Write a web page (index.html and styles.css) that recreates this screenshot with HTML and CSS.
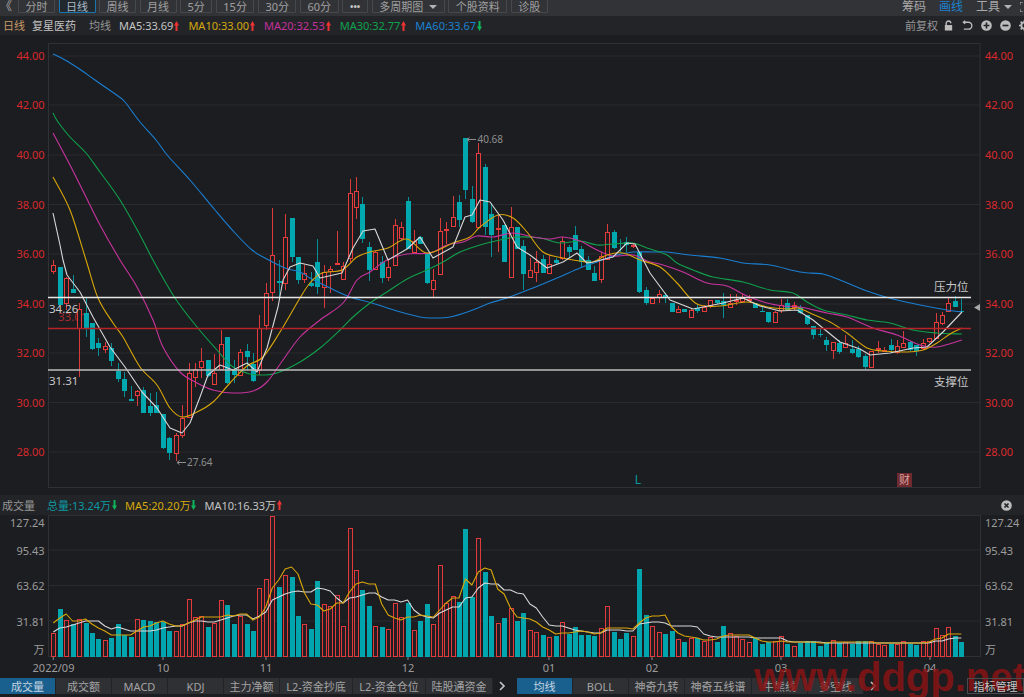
FILE: index.html
```html
<!DOCTYPE html>
<html lang="zh-CN">
<head>
<meta charset="utf-8">
<title>复星医药 日线</title>
<link rel="stylesheet" href="styles.css">
</head>
<body>
<div class="app">
  <header class="toolbar">
    <span class="back">《</span>
    <nav class="periods">
      <span class="btn">分时</span>
      <span class="btn active">日线</span>
      <span class="btn">周线</span>
      <span class="btn">月线</span>
      <span class="btn">5分</span>
      <span class="btn">15分</span>
      <span class="btn">30分</span>
      <span class="btn">60分</span>
      <span class="btn dots">•••</span>
      <span class="btn">多周期图<i class="caret"></i></span>
      <span class="btn">个股资料</span>
      <span class="btn">诊股</span>
    </nav>
    <div class="tools">
      <span>筹码</span>
      <span class="blue">画线</span>
      <span>工具<i class="caret small"></i></span>
      <svg class="full" viewBox="0 0 8 10"><path d="M0 3V0h3M5 0h3M0 7v3h3"/></svg>
    </div>
  </header>

  <section class="info">
    <span class="period">日线</span>
    <span class="name">复星医药</span>
    <span class="kind">均线</span>
    <span class="ma c-white">MA5:33.69<svg class="arrow up" viewBox="0 0 5 10"><path d="M2.5 0 5 4.500H3.500V10h-2V4.500H0z"/></svg></span>
    <span class="ma c-yellow">MA10:33.00<svg class="arrow up" viewBox="0 0 5 10"><path d="M2.5 0 5 4.500H3.500V10h-2V4.500H0z"/></svg></span>
    <span class="ma c-pink">MA20:32.53<svg class="arrow up" viewBox="0 0 5 10"><path d="M2.5 0 5 4.500H3.500V10h-2V4.500H0z"/></svg></span>
    <span class="ma c-green">MA30:32.77<svg class="arrow up" viewBox="0 0 5 10"><path d="M2.5 0 5 4.500H3.500V10h-2V4.500H0z"/></svg></span>
    <span class="ma c-blue">MA60:33.67<svg class="arrow down" viewBox="0 0 5 10"><path d="M2.5 10 5 5.500H3.500V0h-2v5.500H0z"/></svg></span>
    <div class="info-right">
      <span class="kind">前复权</span>
      <svg class="ic" viewBox="0 0 12 12"><path class="ic-line" d="M3.500 6V3.600a2.500 2.500 0 0 1 5 0"/><rect class="ic-fill" x="2" y="5.500" width="8" height="6"/></svg>
      <svg class="ic" viewBox="0 0 12 12"><path class="ic-line" d="M1.500 2.500h5.500a3.500 3.500 0 0 1 0 7.500H2M3.500 .8 1.500 2.500l2 1.700"/></svg>
      <svg class="ic" viewBox="0 0 12 12"><circle class="ic-fill" cx="6" cy="6" r="5.800"/><path class="ic-cut" d="M2.800 6h6.400M6 2.800v6.400"/></svg>
      <svg class="ic" viewBox="0 0 12 12"><circle class="ic-fill" cx="6" cy="6" r="5.800"/><path class="ic-cut" d="M2.800 6h6.400"/></svg>
      <svg class="ic" viewBox="0 0 12 12"><circle class="ic-ring" cx="6" cy="6" r="3.500"/><path class="ic-ray" d="M6 0v2M6 10v2M0 6h2M10 6h2M1.800 1.800l1.400 1.400M8.800 8.800l1.400 1.400M1.800 10.200l1.400-1.400M8.800 3.200l1.400-1.400"/></svg>
    </div>
  </section>

  <svg id="price" class="plot price" viewBox="0 35 1024 460"></svg>

  <section class="info vol-head">
    <span class="kind wide">成交量</span>
    <span class="ma c-teal">总量:13.24万<svg class="arrow down" viewBox="0 0 5 10"><path d="M2.5 10 5 5.500H3.500V0h-2v5.500H0z"/></svg></span>
    <span class="ma c-yellow">MA5:20.20万<svg class="arrow down" viewBox="0 0 5 10"><path d="M2.5 10 5 5.500H3.500V0h-2v5.500H0z"/></svg></span>
    <span class="ma c-white">MA10:16.33万<svg class="arrow up" viewBox="0 0 5 10"><path d="M2.5 0 5 4.500H3.500V10h-2V4.500H0z"/></svg></span>
    <div class="info-right closer">
      <svg class="ic" viewBox="0 0 12 12"><circle class="ic-fill" cx="6" cy="6" r="5.800"/><path class="ic-cut" d="M3.800 3.800l4.400 4.400M8.200 3.800 3.800 8.200"/></svg>
    </div>
  </section>

  <svg id="volume" class="plot volume" viewBox="0 515 1024 163"></svg>

  <footer class="tabs">
    <div class="tabgroup left">
      <span class="tab active">成交量</span>
      <span class="tab">成交额</span>
      <span class="tab">MACD</span>
      <span class="tab">KDJ</span>
      <span class="tab">主力净额</span>
      <span class="tab long">L2-资金抄底</span>
      <span class="tab long">L2-资金仓位</span>
      <span class="tab mid">陆股通资金</span>
    </div>
    <svg class="chev" viewBox="0 0 8 10"><path d="M2 1l4 4-4 4"/></svg>
    <div class="tabgroup right">
      <span class="tab active">均线</span>
      <span class="tab">BOLL</span>
      <span class="tab">神奇九转</span>
      <span class="tab mid2">神奇五线谱</span>
      <span class="tab">牛熊线</span>
      <span class="tab">多空线</span>
    </div>
    <svg class="chev" viewBox="0 0 8 10"><path d="M2 1l4 4-4 4"/></svg>
    <span class="tab manage">指标管理</span>
  </footer>
  <div class="watermark">www.ddgp.net</div>
</div>
<script src="chart.js"></script>
</body>
</html>
```
FILE: styles.css
```css
* { box-sizing: border-box; }
html, body { margin: 0; height: 100%; background: #1c1d21; overflow: hidden; }
body { font: 11px/1 "Noto Sans", "Noto Sans CJK SC", sans-serif; color: #b0b0b0; }
.app { position: relative; width: 1024px; height: 697px; overflow: hidden; display: flex; flex-direction: column; }

.toolbar { height: 16px; flex: none; display: flex; background: #323337; align-items: flex-start; overflow: hidden; }
.back { width: 18px; flex: none; font: 12px/12px "Noto Sans CJK TC", sans-serif; color: #a8a8a8; }
.periods { display: flex; gap: 3.500px; }
.btn { height: 14px; margin-top: -1px; padding: 0 6.500px; border: 1px solid #46484c; border-radius: 1px; color: #a0a0a0; line-height: 13px; white-space: nowrap; }
.btn.active { border-color: #1b76b0; color: #a9b8c4; background: #21282e; }
.dots { font-size: 9px; font-weight: bold; padding: 0 7px; color: #c8c8c8; }
.caret { display: inline-block; width: 0; height: 0; border: 4px solid transparent; border-top: 4px solid #b4b4b4; border-bottom: 0; margin: 0 0 2px 6px; }
.caret.small { margin-left: 4px; }
.tools { margin-left: auto; margin-right: -4px; display: flex; gap: 13px; color: #a8a8a8; line-height: 13px; white-space: nowrap; font-size: 12px; }
.blue { color: #1b82d0; }
.full { width: 8px; height: 10px; margin: 2px 0 0 -5px; fill: none; stroke: #b4b4b4; stroke-width: 1; }

.info { height: 19px; flex: none; display: flex; align-items: center; background: #232428; padding-left: 3px; white-space: nowrap; }
.period { color: #c89a66; margin-right: 7px; }
.name { color: #c2c2c2; margin-right: 13px; }
.kind { color: #969696; margin-right: 8px; }
.ma { display: flex; align-items: center; margin-right: 9px; }
.arrow { width: 5px; height: 10px; margin-left: 1px; }
.arrow.up { fill: #ee3333; }
.arrow.down { fill: #0fb35a; }
.c-white { color: #c4c4c4; }
.c-yellow { color: #d4a90a; }
.c-pink { color: #c4309c; }
.c-green { color: #10a34e; }
.c-blue { color: #1b82d0; }
.c-teal { color: #0b9aa2; }
.info-right { margin-left: auto; display: flex; align-items: center; gap: 8px; margin-right: -6px; }
.info-right .kind { margin-right: -3px; }
.ic { width: 11px; height: 11px; flex: none; }
.ic-fill { fill: #bcbcbc; }
.ic-line { fill: none; stroke: #bcbcbc; stroke-width: 1.500; }
.ic-cut { fill: none; stroke: #232428; stroke-width: 1.800; }
.ic-ring { fill: none; stroke: #bcbcbc; stroke-width: 2.200; }
.ic-ray { fill: none; stroke: #bcbcbc; stroke-width: 1.800; }

.vol-head { height: 20px; }
.wide { margin-right: 12px; margin-left: -1px; }
.vol-head .ma { margin-right: 8px; }
.info-right.closer { margin-right: 12px; }

.plot { display: block; width: 1024px; flex: none; background: #1c1d21; }
.price { height: 460px; }
.volume { height: 163px; }

.frame { fill: none; stroke: #303135; stroke-width: 1; }
.grid { stroke: #2a2b2f; stroke-width: 1; }
.axis-red { fill: #d9292c; font-size: 11px; }
.axis-gray { fill: #9c9c9c; font-size: 11px; }
.end { text-anchor: end; }
.date { fill: #9c9c9c; font-size: 11px; text-anchor: middle; }
.tick { stroke: #8a8a8a; stroke-width: 1; }

.wick-up { stroke: #d93a3a; stroke-width: 1; }
.wick-down { stroke: #058e96; stroke-width: 1; }
.body-up { fill: #1c1d21; stroke: #e83c3c; stroke-width: 1; }
.body-down { fill: #00a8b0; }
.vol-up { fill: #241d21; stroke: #e13a3c; stroke-width: 1; }
.vol-down { fill: #00a5ad; }

.line { fill: none; stroke-width: 1.100; stroke-linejoin: round; }
.l-white { stroke: #d8d8d8; }
.l-yellow { stroke: #d8a60a; }
.l-pink { stroke: #c8349e; }
.l-green { stroke: #10a04c; }
.l-blue { stroke: #1a7fd2; }

.level-high { stroke: #e8e8e8; stroke-width: 1.300; }
.level-mid { stroke: #b52428; stroke-width: 1.300; }
.level-low { stroke: #bcbcbc; stroke-width: 1.300; }
.note { fill: #c8c8c8; font-size: 11.500px; }
.note-red { fill: #a82c2e; font-size: 11.500px; }
.ext { fill: #8e8e8e; font-size: 10px; }
.ext-line { fill: none; stroke: #8e8e8e; stroke-width: 1; }
.pointer { fill: #a8a8a8; }
.letter { fill: #0b9aa2; font-size: 12px; text-anchor: middle; }
.badge { fill: #6e2a2e; }
.badge-text { fill: #d8a0a0; font-size: 11px; text-anchor: middle; }

.tabs { height: 16px; flex: none; display: flex; align-items: stretch; background: #1c1d21; }
.tabgroup { display: flex; }
.tabgroup.right { margin-left: 7px; }
.tab { width: 56px; display: flex; align-items: center; justify-content: center; background: #2f3034; color: #a4a4a4; border-right: 1px solid #222327; white-space: nowrap; }
.tab.active { background: #19608f; color: #c4d4e0; }
.tab.long { width: 73px; }
.tab.mid { width: 67px; }
.tab.mid2 { width: 67px; }
.manage { position: relative; z-index: 2; width: 57px; margin-left: auto; background: transparent; color: #c4c4c4; border: 1px solid #4a4b4f; }
.chev { width: 8px; height: 10px; margin: 3px 4px 0 5px; fill: none; stroke: #c8c8c8; stroke-width: 1.600; flex: none; }

.watermark { position: absolute; z-index: 1; left: 754px; top: 654px; font: bold 40px/46px "Liberation Sans", sans-serif; color: rgba(140, 20, 20, .82); white-space: nowrap; pointer-events: none; }
```
FILE: chart.js
```js
(function () {
  var X0 = 53.3, DX = 6.44;
  function bx(i) { return X0 + DX * i; }
  function ln(c, x1, y1, x2, y2) { return '<line class="' + c + '" x1="' + x1 + '" y1="' + y1 + '" x2="' + x2 + '" y2="' + y2 + '"/>'; }
  function txt(c, x, y, s) { return '<text class="' + c + '" x="' + x + '" y="' + y + '">' + s + '</text>'; }
  function poly(c, pts) { return '<polyline class="line ' + c + '" points="' + pts.join(' ') + '"/>'; }
  /* Catmull-Rom smoothing of a moving-average curve */
  function smooth(c, pts) {
    var p = pts.map(function (s) { return s.split(',').map(Number); });
    var d = 'M' + p[0][0] + ' ' + p[0][1];
    for (var i = 0; i < p.length - 1; i++) {
      var a = p[Math.max(i - 1, 0)], b = p[i], e = p[i + 1], f = p[Math.min(i + 2, p.length - 1)];
      d += 'C' + (b[0] + (e[0] - a[0]) / 6).toFixed(1) + ' ' + (b[1] + (e[1] - a[1]) / 6).toFixed(1) + ' ' +
        (e[0] - (f[0] - b[0]) / 6).toFixed(1) + ' ' + (e[1] - (f[1] - b[1]) / 6).toFixed(1) + ' ' + e[0] + ' ' + e[1];
    }
    return '<path class="line ' + c + '" d="' + d + '"/>';
  }

  /* candle: up(1)/down(0), body top, body bottom, wick top, wick bottom */
  var C = [
    [1,265,271,260,274],[0,267,305,267,305],[1,278,303,277,310],[0,289,293,275,293],[1,309,328,303,377],
    [0,313,328,298,337],[0,323,349,323,350],[0,343,348,338,356],[1,346,349,342,353],[0,348,361,343,366],
    [0,371,379,363,382],[0,379,391,372,397],[0,399,401,386,401],[1,391,395,390,406],[0,390,413,387,413],
    [0,406,413,393,416],[0,405,413,392,413],[0,414,448,414,449],[0,438,453,437,460],[1,435,453,433,461],
    [1,418,435,405,438],[1,373,417,363,417],[1,369,377,363,387],[1,361,367,348,378],[0,360,376,360,377],
    [1,373,384,354,385],[1,344,369,330,370],[0,337,383,337,384],[0,370,375,360,383],[1,352,375,349,376],
    [0,351,357,344,370],[0,364,381,353,382],[1,328,370,315,375],[1,293,325,283,330],[1,255,292,208,301],
    [0,281,283,260,300],[1,237,283,214,290],[0,218,257,218,262],[0,257,280,257,284],[1,273,279,265,283],
    [0,283,286,272,287],[0,262,287,239,294],[1,272,287,265,308],[1,269,271,266,293],[1,263,264,231,264],
    [1,266,279,262,280],[1,193,258,179,263],[1,191,207,177,219],[0,204,239,197,243],[0,247,270,242,281],
    [1,252,269,251,269],[0,262,278,256,283],[1,267,277,260,281],[1,225,265,219,265],[1,227,238,222,240],
    [0,201,249,197,249],[1,241,252,230,252],[0,237,244,236,244],[0,253,283,253,284],[1,280,289,269,297],
    [1,231,274,218,274],[1,229,230,222,244],[1,217,226,196,226],[0,202,220,195,227],[0,138,190,138,199],
    [0,199,222,186,223],[1,153,227,143,227],[0,167,227,164,235],[0,214,235,203,257],[1,228,229,215,252],
    [0,225,262,225,262],[1,227,277,207,277],[0,227,249,227,249],[0,246,274,240,290],[1,270,277,258,277],
    [1,262,272,251,282],[0,259,273,255,273],[1,264,273,255,273],[0,260,263,258,264],[1,241,258,237,260],
    [0,247,252,245,258],[0,235,250,226,250],[0,249,262,246,267],[0,260,270,256,270],[0,273,281,266,281],
    [1,256,279,252,283],[1,232,259,224,259],[0,232,248,230,249],[0,243,244,239,252],[0,242,245,237,252],
    [1,245,246,243,248],[0,252,292,252,293],[0,290,303,287,305],[1,298,303,298,304],[1,294,297,290,303],
    [0,295,298,293,303],[0,303,312,303,312],[1,309,312,306,312],[0,309,312,309,312],[1,310,317,308,318],
    [0,308,311,305,313],[1,307,311,305,312],[1,300,305,300,308],[0,300,303,300,304],[0,301,305,293,318],
    [1,303,307,294,307],[1,300,301,294,305],[1,298,301,294,303],[1,299,300,295,302],[0,303,308,303,308],
    [0,311,312,306,312],[0,312,322,312,323],[1,312,322,311,323],[1,305,310,299,313],[0,303,310,299,310],
    [1,305,307,302,310],[0,307,313,305,314],[0,315,324,315,325],[0,326,335,326,339],[0,334,335,329,337],
    [0,340,345,337,351],[1,342,350,342,359],[0,343,352,340,354],[1,343,347,335,347],[0,349,353,340,354],
    [0,349,357,346,358],[0,356,367,354,369],[1,351,367,351,367],[1,348,349,341,353],[1,350,351,347,352],
    [0,345,350,339,352],[1,346,352,340,354],[1,343,347,331,348],[0,342,350,341,351],[0,345,351,345,356],
    [1,343,348,339,350],[1,338,341,338,343],[1,322,338,313,338],[1,315,323,312,325],[1,303,311,298,311],
    [0,301,307,296,307],[0,311,312,299,312]
  ];

  /* volume bar: up(1)/down(0), top */
  var V = [
    [1,633],[0,609],[1,620],[0,624],[1,619],[0,623],[0,633],[0,639],[1,640],[0,638],[0,624],[0,635],[0,637],[1,619],[0,620],
    [0,621],[0,622],[0,622],[0,631],[1,631],[1,624],[1,599],[1,617],[1,616],[0,627],[1,623],[1,600],[0,605],[0,624],[1,616],
    [0,624],[0,631],[1,588],[1,579],[1,516],[0,587],[1,575],[0,577],[0,616],[1,624],[0,629],[0,581],[1,604],[1,606],[1,595],
    [1,626],[1,528],[1,570],[0,590],[0,606],[1,626],[0,627],[1,629],[1,603],[1,617],[0,603],[1,630],[0,621],[0,604],[1,624],
    [1,565],[1,603],[1,596],[0,602],[0,529],[0,597],[1,538],[0,572],[0,616],[1,623],[0,618],[1,608],[0,621],[0,613],[1,630],
    [1,632],[0,635],[1,637],[0,636],[1,622],[0,634],[0,627],[0,635],[0,635],[0,636],[1,628],[1,606],[0,632],[0,639],[0,633],
    [1,636],[0,569],[0,615],[1,626],[1,632],[0,634],[0,631],[1,639],[0,642],[1,638],[0,638],[1,641],[1,637],[0,642],[0,626],
    [1,633],[1,636],[1,639],[1,642],[0,638],[0,644],[0,642],[1,641],[1,636],[0,644],[1,646],[0,643],[0,641],[0,641],[0,646],
    [0,642],[1,640],[0,643],[1,642],[0,644],[0,641],[0,641],[1,641],[1,644],[1,645],[0,644],[1,644],[1,641],[0,644],[0,645],
    [1,641],[1,641],[1,628],[1,635],[1,627],[0,636],[0,642]
  ];

  var VY = [623,618,614,621,621,619,624,628,631,635,635,635,635,631,627,626,623,621,624,626,626,623,620,617,617,617,617,615,616,614,614,620,617,607,588,580,569,567,574,593,604,605,611,609,603,
    603,592,584,582,584,584,604,615,618,620,617,617,615,616,617,610,603,598,598,579,585,572,568,570,589,594,608,617,618,619,622,627,630,634,633,633,632,631,632,634,633,628,628,628,628,629,623,618,616,616,615,627,633,
    636,637,638,640,640,639,636,635,635,635,635,638,641,642,642,641,642,642,642,642,642,643,643,642,642,642,642,642,642,642,643,643,643,643,643,643,643,643,642,639,638,634,634,634];
  var VW = [632,628,627,625,623,621,621,621,626,629,627,629,631,631,631,631,630,628,627,626,626,623,621,621,622,622,620,618,616,615,615,619,616,612,600,597,594,592,591,592,592,588,589,591,598,
    603,598,597,595,593,593,597,600,600,602,600,610,615,617,618,613,610,607,607,598,597,588,583,584,584,590,590,593,594,604,608,617,625,626,626,628,630,631,632,633,633,630,630,630,631,631,624,623,622,622,623,626,626,
    626,626,627,634,636,637,637,637,637,637,637,638,638,638,638,638,641,642,642,642,642,642,643,643,643,643,643,643,643,643,643,643,643,643,643,643,643,643,643,641,641,639,638,638];

  var L5 = ['53,213','60,245','63,260','67,275','80,292','93,317','110,347','125,367','142,392','157,408','170,428','182,433','190,423','200,397','208,375','220,365','233,370','247,363','257,372','267,348','278,307','283,280','290,267','300,263','313,266','320,278','342,273','353,248','363,231','375,229','388,260','407,249','420,237','433,258','453,247','465,217','472,215','480,200','490,202','503,220','517,247','530,255','547,268','563,262','577,253','587,263','593,262','613,257','627,243','635,244','650,273','670,300','693,309','723,303','743,298','760,306','780,311','797,310','813,320','840,342','860,349','870,355','890,353','913,348','927,347','943,332','962,312'];
  var L10 = ['53,177','70,210','86,260','98,298','113,323','123,337','140,367','157,385','170,408','182,417','197,412','213,402','230,383','247,366','263,357','280,332','300,298','310,283','322,273','342,270','357,257','370,252','388,248','407,239','427,253','453,243','470,237','480,227','498,215','513,218','527,232','543,252','563,258','580,261','593,262','607,255','623,253','640,260','660,267','677,283','697,304','720,306','747,302','767,307','787,309','798,308','810,313','830,322','847,333','867,348','883,351','907,352','923,350','937,343','950,334','962,328'];
  var L20 = ['53,133','70,165','85,195','100,225','120,260','137,287','153,320','163,347','180,372','197,383','213,390','233,393','253,391','267,382','283,360','300,337','320,320','343,303','357,280','370,272','387,260','407,254','430,253','447,245','463,242','477,236','493,237','513,233','533,237','550,239','563,237','580,241','597,250','613,256','633,255','647,261','663,265','683,272','707,283','727,286','747,296','767,303','783,306','800,307','827,313','847,317','873,328','897,335','920,345','937,347','962,340'];
  var L30 = ['53,113','58,122','70,137','86,153','100,172','120,200','140,235','153,260','175,298','197,327','217,350','233,367','250,374','263,375','277,373','300,362','320,348','340,330','353,317','370,303','387,292','407,279','427,270','443,262','460,252','480,245','500,240','517,237','540,238','560,243','580,241','597,245','613,244','633,243','647,248','667,255','677,263','693,270','713,277','743,282','770,290','793,293','807,302','823,310','847,315','867,320','890,323','913,330','937,333','962,334'];
  var L60 = ['53,54','65,60','78,68','95,80','118,96','125,102','140,122','156,140','168,156','190,180','215,210','235,233','252,250','265,258','285,268','300,272','310,278','330,288','350,297','372,303','397,311','420,317','433,318','450,317','470,311','490,303','507,298','533,288','557,278','580,268','597,262','613,256','633,252','653,252','667,252','690,255','720,258','743,263','770,265','800,272','823,274','840,280','867,291','893,299','920,305','947,310','962,312'];

  var prices = [[44,56],[42,105],[40,155],[38,204.5],[36,254],[34,304],[32,353],[30,402.5],[28,452]];
  var h = '';
  prices.forEach(function (p) { h += ln('grid', 48, p[1], 980, p[1]); });
  h += '<rect class="frame" x="48.500" y="43.500" width="931.500" height="444"/>';
  prices.forEach(function (p) {
    var s = p[0].toFixed(2), y = p[1] + 4;
    h += txt('axis-red end', 44.5, y, s) + txt('axis-red', 985, y, s);
  });
  h += txt('note-red', 58, 321, '33.01');
  C.forEach(function (c, i) {
    var x = Math.round(bx(i)) + 0.5, up = c[0];
    h += ln(up ? 'wick-up' : 'wick-down', x, c[3], x, c[4]);
    if (up) {
      h += '<rect class="body-up" x="' + (x - 2) + '" y="' + (c[1] + .5) + '" width="4" height="' + (c[2] - c[1]) + '"/>';
    } else {
      h += '<rect class="body-down" x="' + (x - 2.5) + '" y="' + c[1] + '" width="5" height="' + Math.max(c[2] - c[1], 1) + '"/>';
    }
  });
  h += smooth('l-blue', L60) + smooth('l-green', L30) + smooth('l-pink', L20) + smooth('l-yellow', L10) + poly('l-white', L5);
  h += ln('level-high', 48, 297.5, 971, 297.5) + ln('level-mid', 48, 328.5, 971, 328.5) + ln('level-low', 48, 370, 971, 370);
  h += txt('note', 49, 313, '34.26') + txt('note', 49, 385, '31.31');
  h += txt('note', 934, 291, '压力位') + txt('note', 934, 386, '支撑位');
  h += '<path class="pointer" d="M974 307.500l6-3.500v7z"/>';
  h += '<path class="ext-line" d="M476 139.500H467M469.500 137.500l-2.500 2 2.500 2"/>' + txt('ext', 477.5, 143, '40.68');
  h += '<path class="ext-line" d="M186 462.500H177M179.500 460.500l-2.500 2 2.500 2"/>' + txt('ext', 187, 466, '27.64');
  h += txt('letter', 638, 484, 'L');
  h += '<rect class="badge" x="897" y="473" width="15" height="14"/>' + txt('badge-text', 904.5, 484, '财');
  document.getElementById('price').innerHTML = h;

  var vAxis = [['127.24', 523], ['95.43', 551], ['63.62', 586], ['31.81', 621.5], ['万', 650]];
  var vGrid = [550, 585.5, 621];
  var dates = [[53.3, 53.5, '2022/09'], [163, 163, '10'], [266, 266, '11'], [408, 408, '12'], [549, 549, '01'], [652, 652, '02'], [781, 781, '03'], [930, 930, '04']];
  var v = '';
  vGrid.forEach(function (y) { v += ln('grid', 48, y, 980, y); });
  v += '<rect class="frame" x="48.500" y="515.500" width="932" height="141"/>';
  vAxis.forEach(function (a) {
    v += txt('axis-gray end', 44.5, a[1] + 4, a[0]) + txt('axis-gray', 985, a[1] + 4, a[0]);
  });
  V.forEach(function (b, i) {
    var x = Math.round(bx(i)) + 0.5;
    if (b[0]) {
      v += '<rect class="vol-up" x="' + (x - 2) + '" y="' + (b[1] + .5) + '" width="4" height="' + (656 - b[1]) + '"/>';
    } else {
      v += '<rect class="vol-down" x="' + (x - 2.5) + '" y="' + b[1] + '" width="5" height="' + (657 - b[1]) + '"/>';
    }
  });
  function series(arr) { return arr.map(function (y, i) { return bx(i).toFixed(1) + ',' + y; }); }
  v += poly('l-white', series(VW)) + poly('l-yellow', series(VY));
  dates.forEach(function (d) {
    v += ln('tick', d[0], 657, d[0], 660) + txt('date', d[1], 672, d[2]);
  });
  document.getElementById('volume').innerHTML = v;
})();
```
